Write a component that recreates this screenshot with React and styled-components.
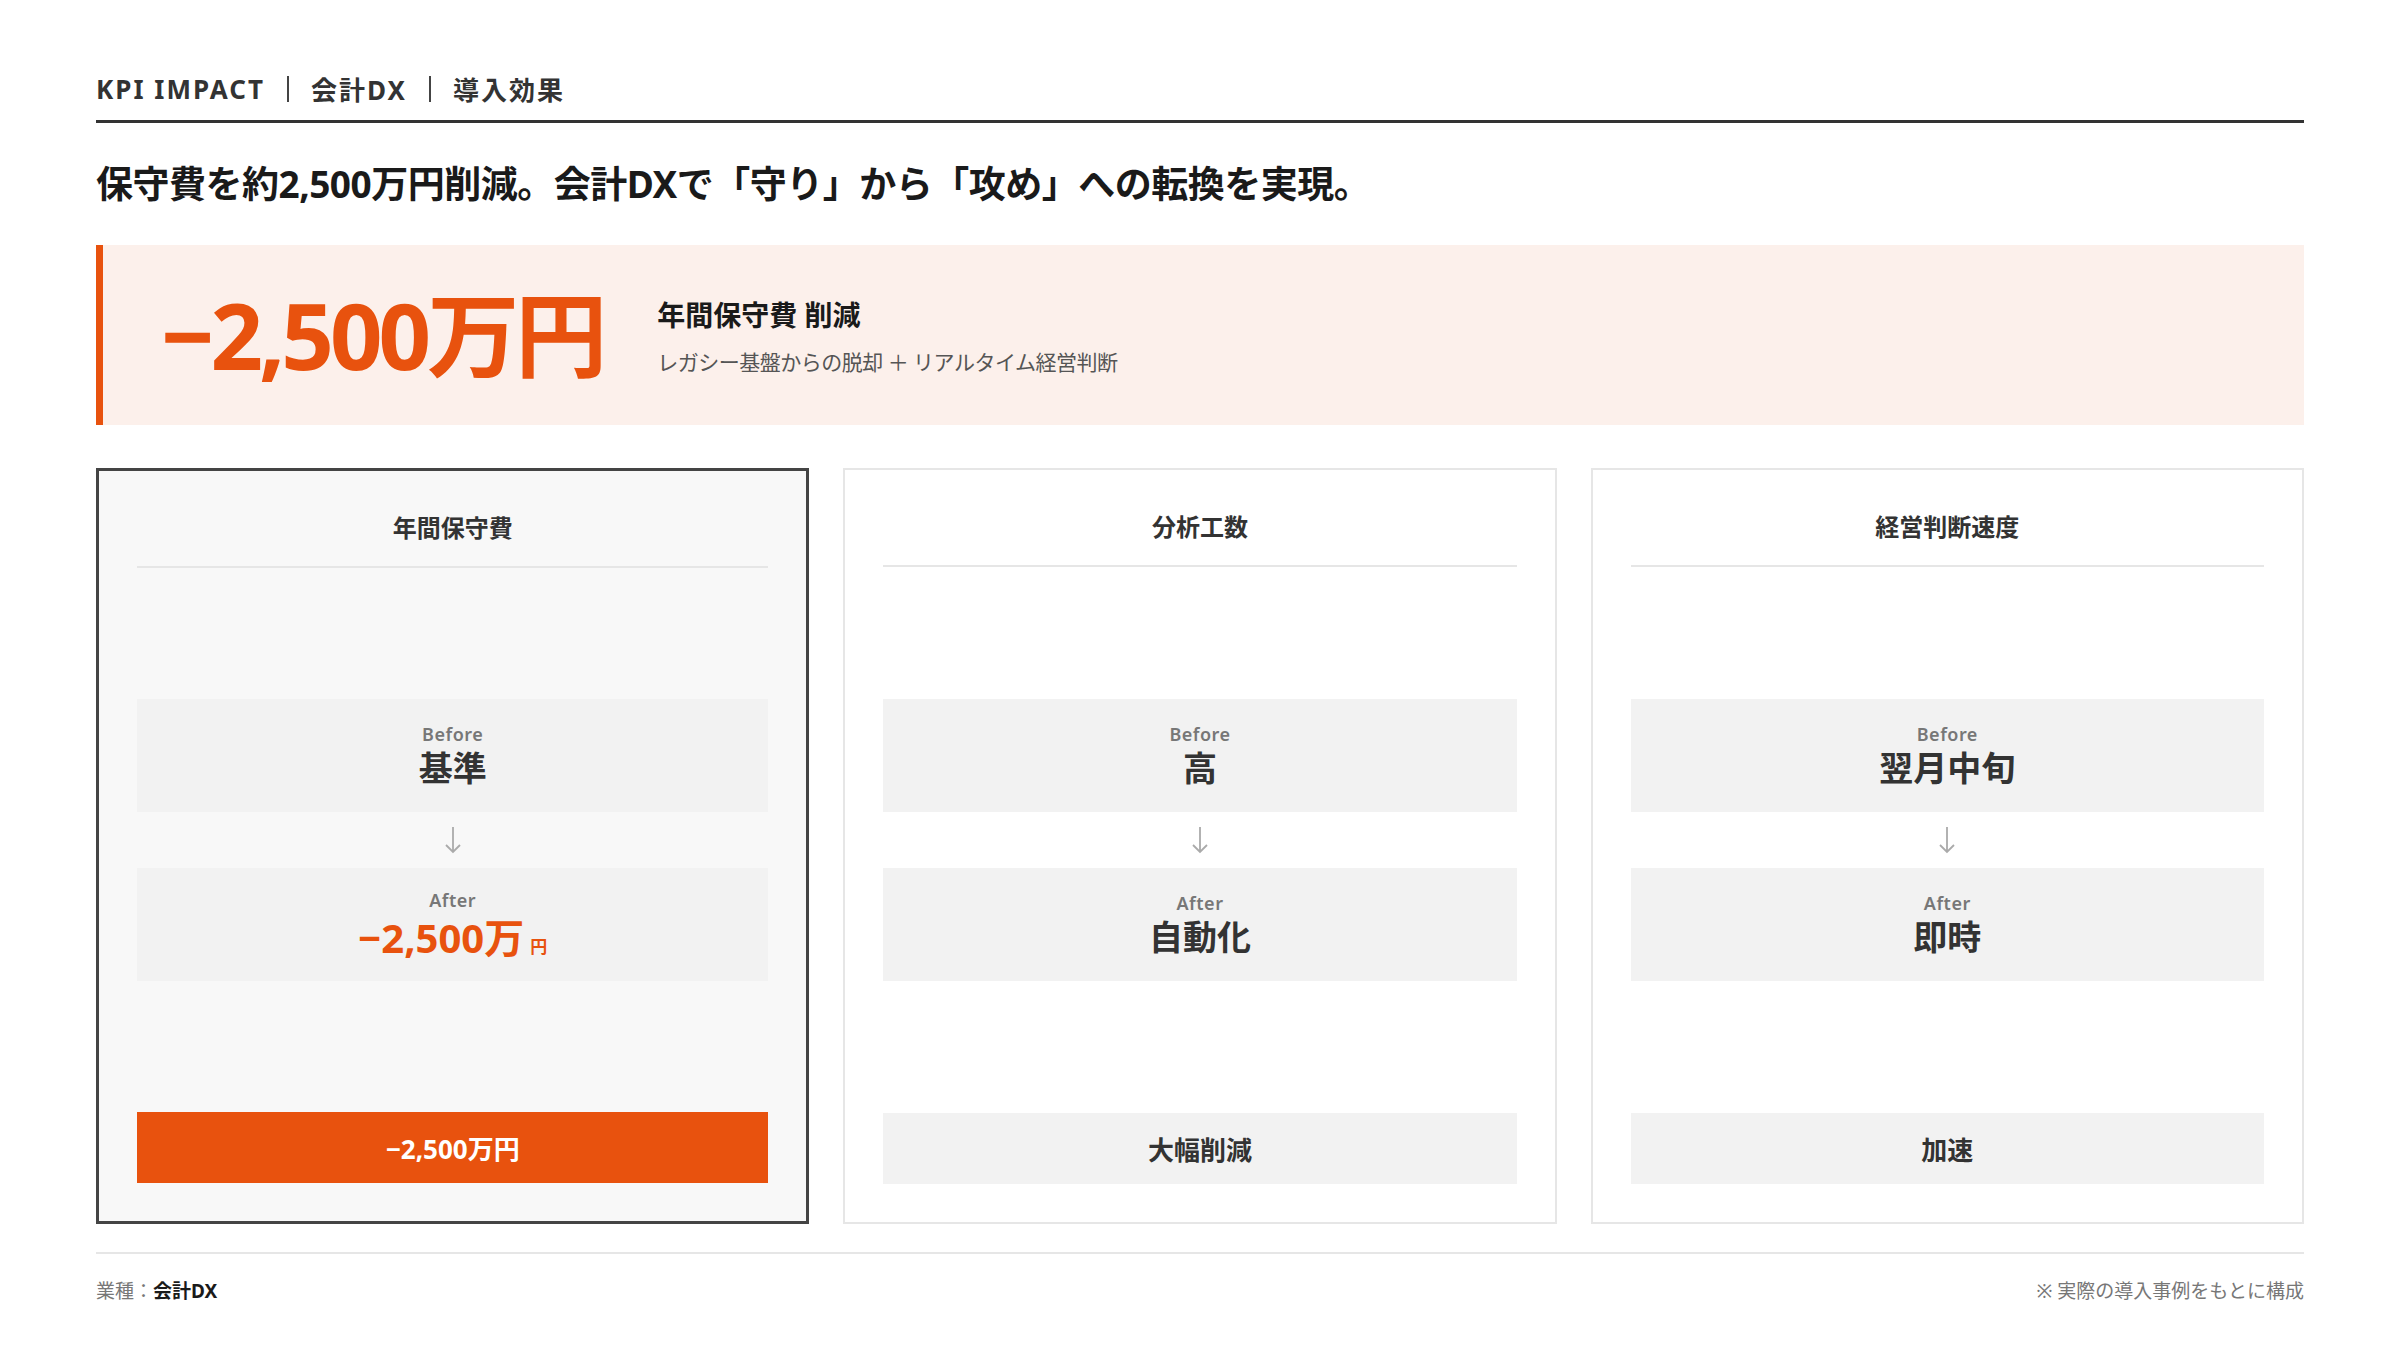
import React from "react";
import styled, { createGlobalStyle } from "styled-components";

const Global = createGlobalStyle`
  html, body { margin: 0; background: #fff; }
  body { font-family: "Noto Sans", "Noto Sans CJK JP", sans-serif; color: #222; }
`;

const Page = styled.div`
  width: 2400px; height: 1350px; box-sizing: border-box;
  padding: 70px 96px 0; display: flex; flex-direction: column;
`;
const Header = styled.div`
  display: flex; align-items: center; gap: 22px;
  font-size: 26px; font-weight: 700; color: #333; letter-spacing: 2px;
  padding-bottom: 12px; border-bottom: 3px solid #333;
`;
const Sep = styled.span`width: 2px; height: 26px; background: #444;`;
const Title = styled.h1`
  margin: 32px 0 0; font-size: 37px; font-weight: 700; color: #1a1a1a; letter-spacing: -0.5px;
`;
const Banner = styled.div`
  margin-top: 36px; height: 180px; box-sizing: border-box;
  background: #fcf0eb; border-left: 7px solid #e8520e;
  display: flex; align-items: center; padding-left: 58px; gap: 54px;
`;
const BigNum = styled.div`
  font-size: 92px; font-weight: 700; color: #e8520e; letter-spacing: -4px; line-height: 1;
`;
const BannerText = styled.div`display: flex; flex-direction: column; gap: 12px;`;
const BannerHead = styled.div`font-size: 28px; font-weight: 700; color: #1a1a1a;`;
const BannerSub = styled.div`font-size: 21px; color: #555; letter-spacing: -0.5px;`;
const Cards = styled.div`
  margin-top: 43px; display: grid; grid-template-columns: repeat(3, 1fr); gap: 34px; height: 756px;
`;
const Card = styled.div`
  box-sizing: border-box; display: flex; flex-direction: column;
  padding: 0 38px 38px;
  background: ${p => (p.$active ? "#f8f8f8" : "#fff")};
  border: ${p => (p.$active ? "3px solid #444" : "2px solid #e6e6e6")};
`;
const CardTitle = styled.div`
  text-align: center; font-size: 24px; font-weight: 700; color: #333;
  padding: 38px 0 22px; border-bottom: 2px solid #e6e6e6;
`;
const Middle = styled.div`
  flex: 1; display: flex; flex-direction: column; justify-content: center;
`;
const Box = styled.div`
  background: #f2f2f2; height: 113px; display: flex; flex-direction: column;
  align-items: center; justify-content: center; gap: 2px;
`;
const Label = styled.div`font-size: 18px; font-weight: 600; color: #777; letter-spacing: 0.5px;`;
const Value = styled.div`
  font-size: ${p => (p.$accent ? "40px" : "34px")}; font-weight: 700; line-height: 1.2;
  color: ${p => (p.$accent ? "#e8520e" : "#333")};
`;
const Small = styled.span`font-size: 17px; margin-left: 6px;`;
const Arrow = styled.div`
  height: 56px; display: flex; align-items: center; justify-content: center;
`;
const Bottom = styled.div`
  height: 71px; display: flex; align-items: center; justify-content: center;
  font-size: 26px; font-weight: 700;
  background: ${p => (p.$accent ? "#e8520e" : "#f2f2f2")};
  color: ${p => (p.$accent ? "#fff" : "#333")};
`;
const Footer = styled.div`
  margin-top: 28px; border-top: 2px solid #e6e6e6; padding-top: 22px;
  display: flex; justify-content: space-between; font-size: 19px; color: #777;
`;
const Strong = styled.b`color: #1a1a1a;`;

const ArrowIcon = () => (
  <svg width="20" height="30" viewBox="0 0 20 30" fill="none" stroke="#aaa" strokeWidth="1.8">
    <path d="M10 2 V27 M3 20 L10 27 L17 20" />
  </svg>
);

const data = [
  { t: "年間保守費", b: "基準", a: <>−2,500万<Small>円</Small></>, r: "−2,500万円", active: true },
  { t: "分析工数", b: "高", a: "自動化", r: "大幅削減" },
  { t: "経営判断速度", b: "翌月中旬", a: "即時", r: "加速" },
];

export default function App() {
  return (
    <Page>
      <Global />
      <Header>KPI IMPACT<Sep />会計DX<Sep />導入効果</Header>
      <Title>保守費を約2,500万円削減。会計DXで「守り」から「攻め」への転換を実現。</Title>
      <Banner>
        <BigNum>−2,500万円</BigNum>
        <BannerText>
          <BannerHead>年間保守費 削減</BannerHead>
          <BannerSub>レガシー基盤からの脱却 ＋ リアルタイム経営判断</BannerSub>
        </BannerText>
      </Banner>
      <Cards>
        {data.map(d => (
          <Card key={d.t} $active={d.active}>
            <CardTitle>{d.t}</CardTitle>
            <Middle>
              <Box><Label>Before</Label><Value>{d.b}</Value></Box>
              <Arrow><ArrowIcon /></Arrow>
              <Box><Label>After</Label><Value $accent={d.active}>{d.a}</Value></Box>
            </Middle>
            <Bottom $accent={d.active}>{d.r}</Bottom>
          </Card>
        ))}
      </Cards>
      <Footer>
        <span>業種：<Strong>会計DX</Strong></span>
        <span>※ 実際の導入事例をもとに構成</span>
      </Footer>
    </Page>
  );
}
